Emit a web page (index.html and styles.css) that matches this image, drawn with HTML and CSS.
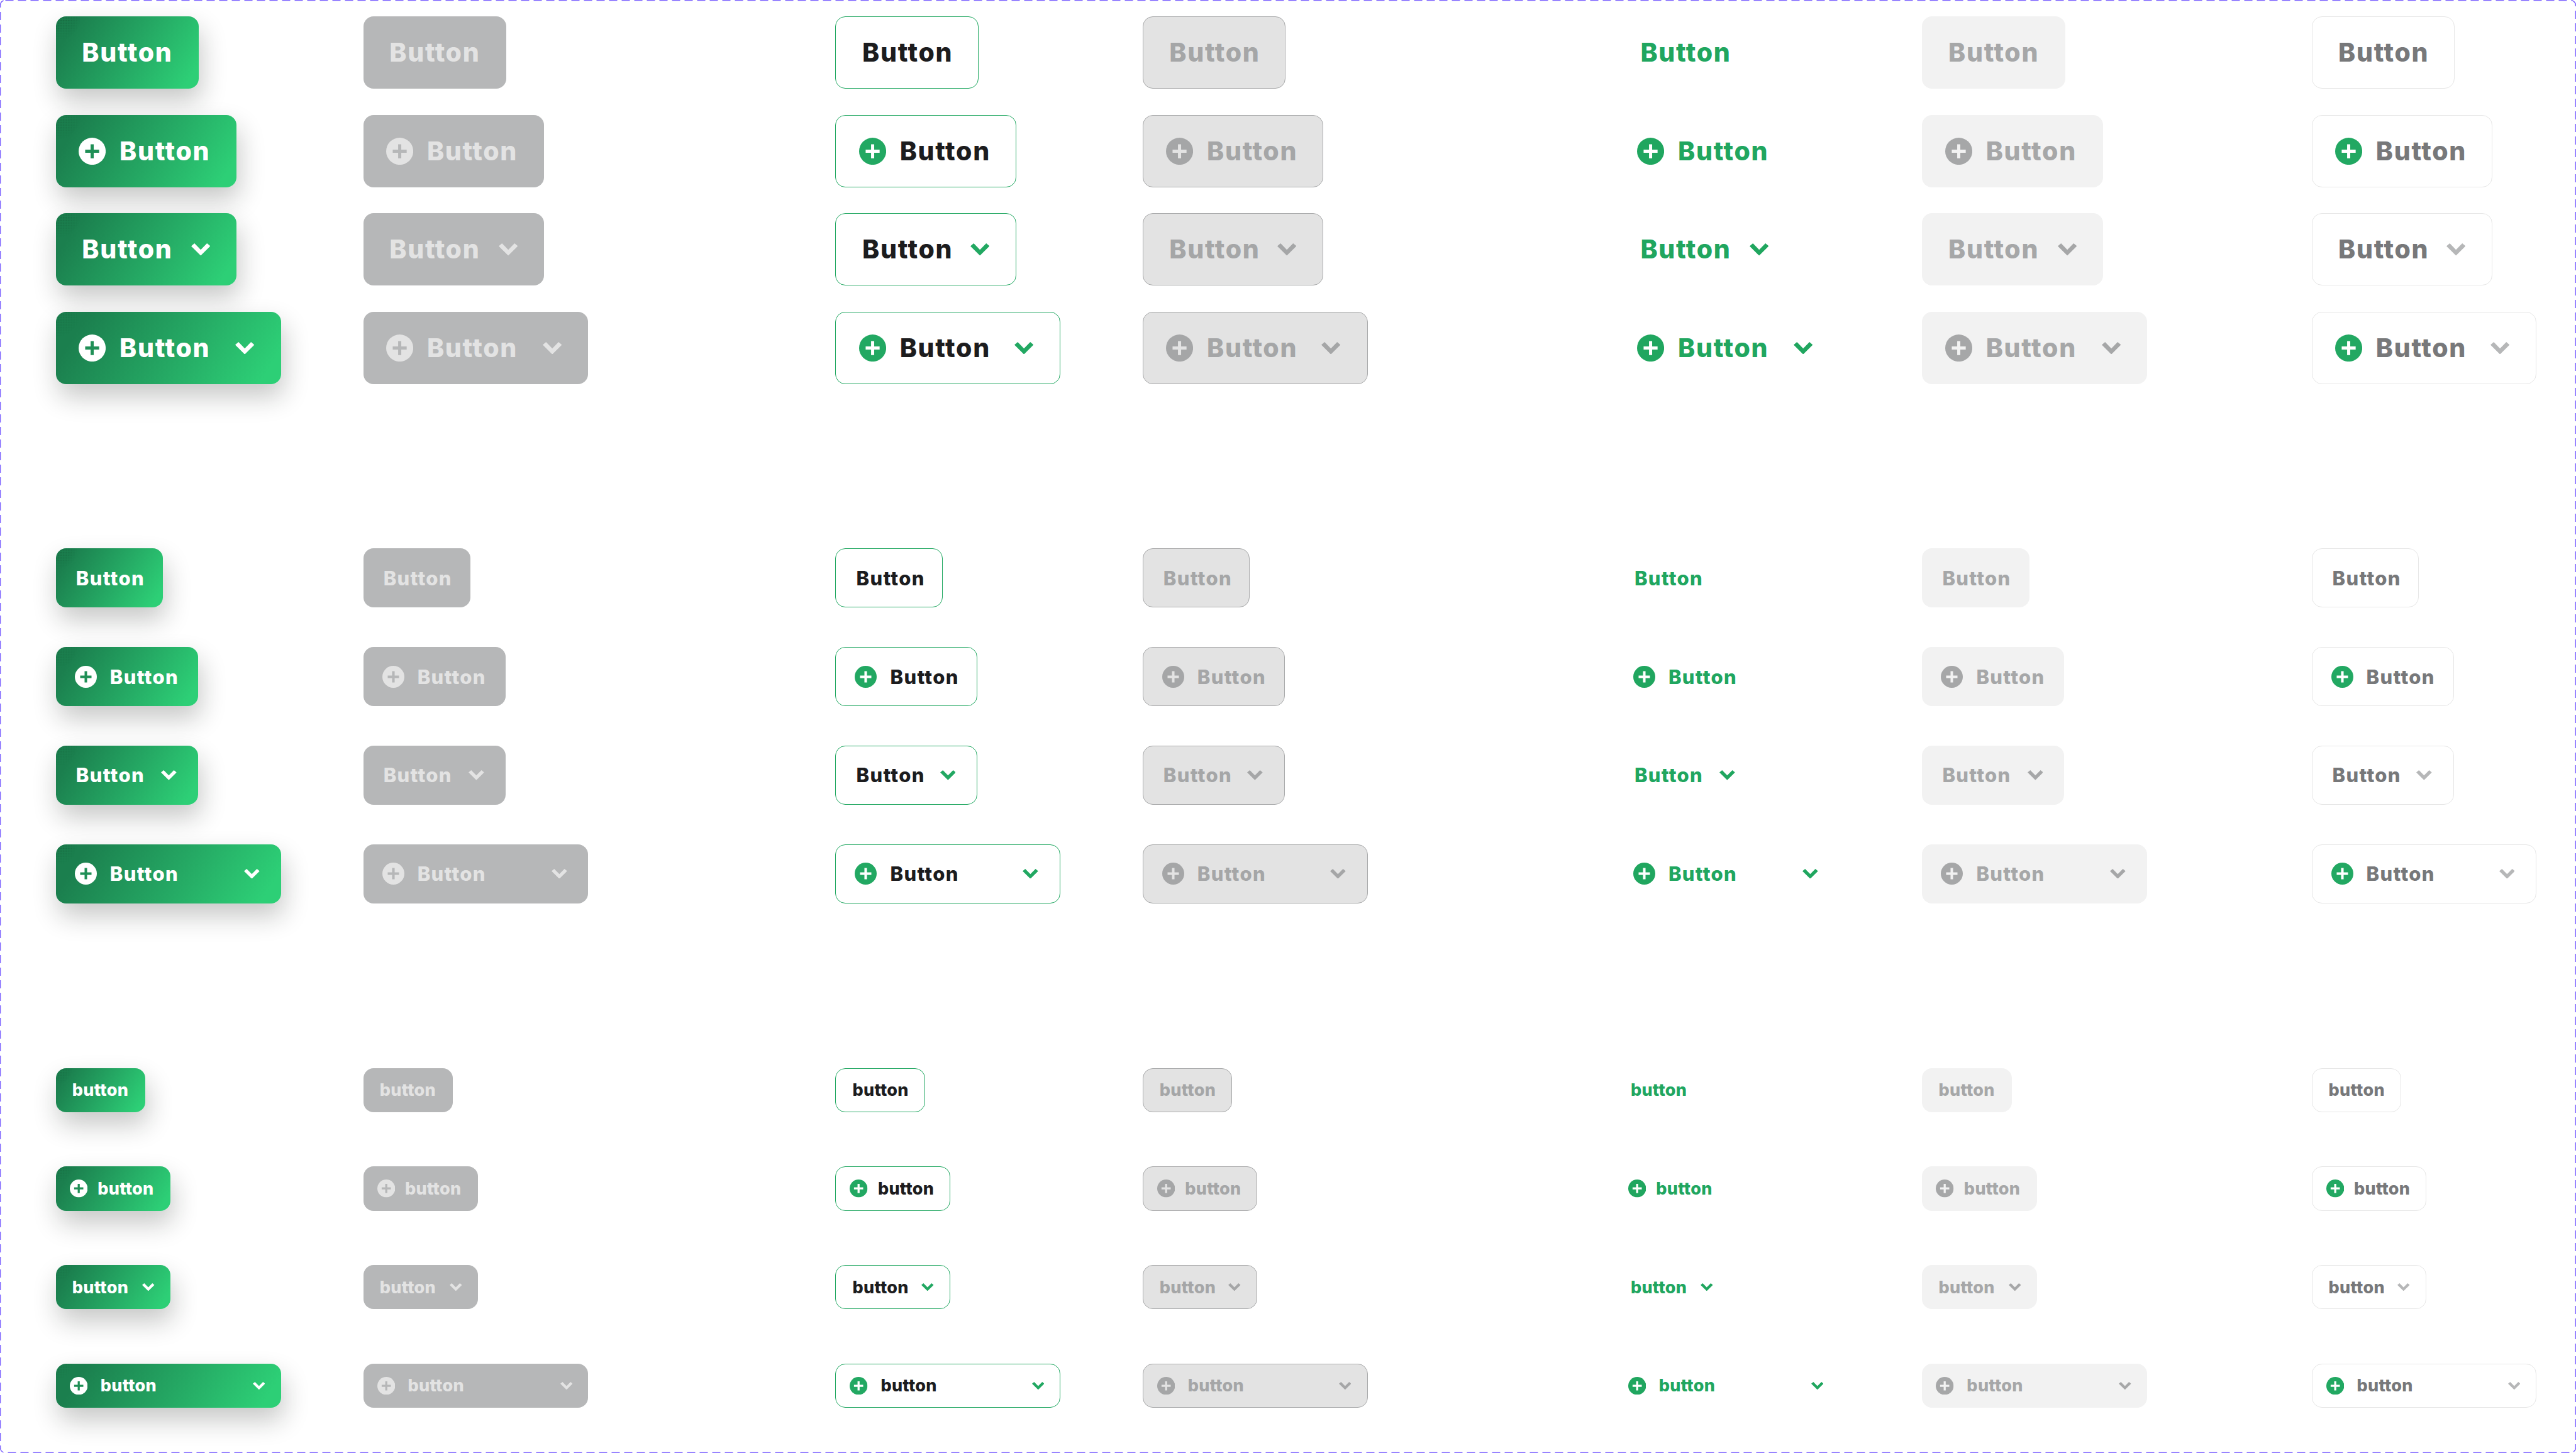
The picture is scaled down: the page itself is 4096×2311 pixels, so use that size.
FILE: index.html
```html
<!DOCTYPE html>
<html lang="en">
<head>
<meta charset="utf-8">
<title>Buttons</title>
<link rel="stylesheet" href="styles.css">
</head>
<body>
<svg class="defs" width="0" height="0" aria-hidden="true">
  <symbol id="plus" viewBox="0 0 66 66"><circle cx="33" cy="33" r="33" fill="currentColor"/><path class="plus-mark" d="M29.2 16h7.6v13.2H50v7.6H36.800V50h-7.6V36.800H16v-7.600h13.200z"/></symbol>
  <symbol id="chev" viewBox="0 0 46.500 30" preserveAspectRatio="none"><path fill="currentColor" d="M0 6.700 8 0l15.200 15.700L38.500 0l8 6.700L23.200 30z"/></symbol>
</svg>
<main class="board">
  <section class="group lg">
    <button class="btn primary plain"><span class="lbl">Button</span></button>
    <button class="btn primary-off plain"><span class="lbl">Button</span></button>
    <button class="btn outline plain"><span class="lbl">Button</span></button>
    <button class="btn outline-off plain"><span class="lbl">Button</span></button>
    <button class="btn ghost plain"><span class="lbl">Button</span></button>
    <button class="btn ghost-off plain"><span class="lbl">Button</span></button>
    <button class="btn line plain"><span class="lbl">Button</span></button>

    <button class="btn primary lead"><svg class="ico"><use href="#plus"/></svg><span class="lbl">Button</span></button>
    <button class="btn primary-off lead"><svg class="ico"><use href="#plus"/></svg><span class="lbl">Button</span></button>
    <button class="btn outline lead"><svg class="ico"><use href="#plus"/></svg><span class="lbl">Button</span></button>
    <button class="btn outline-off lead"><svg class="ico"><use href="#plus"/></svg><span class="lbl">Button</span></button>
    <button class="btn ghost lead"><svg class="ico"><use href="#plus"/></svg><span class="lbl">Button</span></button>
    <button class="btn ghost-off lead"><svg class="ico"><use href="#plus"/></svg><span class="lbl">Button</span></button>
    <button class="btn line lead"><svg class="ico"><use href="#plus"/></svg><span class="lbl">Button</span></button>

    <button class="btn primary trail"><span class="lbl">Button</span><svg class="car"><use href="#chev"/></svg></button>
    <button class="btn primary-off trail"><span class="lbl">Button</span><svg class="car"><use href="#chev"/></svg></button>
    <button class="btn outline trail"><span class="lbl">Button</span><svg class="car"><use href="#chev"/></svg></button>
    <button class="btn outline-off trail"><span class="lbl">Button</span><svg class="car"><use href="#chev"/></svg></button>
    <button class="btn ghost trail"><span class="lbl">Button</span><svg class="car"><use href="#chev"/></svg></button>
    <button class="btn ghost-off trail"><span class="lbl">Button</span><svg class="car"><use href="#chev"/></svg></button>
    <button class="btn line trail"><span class="lbl">Button</span><svg class="car"><use href="#chev"/></svg></button>

    <button class="btn primary both"><svg class="ico"><use href="#plus"/></svg><span class="lbl">Button</span><svg class="car"><use href="#chev"/></svg></button>
    <button class="btn primary-off both"><svg class="ico"><use href="#plus"/></svg><span class="lbl">Button</span><svg class="car"><use href="#chev"/></svg></button>
    <button class="btn outline both"><svg class="ico"><use href="#plus"/></svg><span class="lbl">Button</span><svg class="car"><use href="#chev"/></svg></button>
    <button class="btn outline-off both"><svg class="ico"><use href="#plus"/></svg><span class="lbl">Button</span><svg class="car"><use href="#chev"/></svg></button>
    <button class="btn ghost both"><svg class="ico"><use href="#plus"/></svg><span class="lbl">Button</span><svg class="car"><use href="#chev"/></svg></button>
    <button class="btn ghost-off both"><svg class="ico"><use href="#plus"/></svg><span class="lbl">Button</span><svg class="car"><use href="#chev"/></svg></button>
    <button class="btn line both"><svg class="ico"><use href="#plus"/></svg><span class="lbl">Button</span><svg class="car"><use href="#chev"/></svg></button>
  </section>

  <section class="group md">
    <button class="btn primary plain"><span class="lbl">Button</span></button>
    <button class="btn primary-off plain"><span class="lbl">Button</span></button>
    <button class="btn outline plain"><span class="lbl">Button</span></button>
    <button class="btn outline-off plain"><span class="lbl">Button</span></button>
    <button class="btn ghost plain"><span class="lbl">Button</span></button>
    <button class="btn ghost-off plain"><span class="lbl">Button</span></button>
    <button class="btn line plain"><span class="lbl">Button</span></button>

    <button class="btn primary lead"><svg class="ico"><use href="#plus"/></svg><span class="lbl">Button</span></button>
    <button class="btn primary-off lead"><svg class="ico"><use href="#plus"/></svg><span class="lbl">Button</span></button>
    <button class="btn outline lead"><svg class="ico"><use href="#plus"/></svg><span class="lbl">Button</span></button>
    <button class="btn outline-off lead"><svg class="ico"><use href="#plus"/></svg><span class="lbl">Button</span></button>
    <button class="btn ghost lead"><svg class="ico"><use href="#plus"/></svg><span class="lbl">Button</span></button>
    <button class="btn ghost-off lead"><svg class="ico"><use href="#plus"/></svg><span class="lbl">Button</span></button>
    <button class="btn line lead"><svg class="ico"><use href="#plus"/></svg><span class="lbl">Button</span></button>

    <button class="btn primary trail"><span class="lbl">Button</span><svg class="car"><use href="#chev"/></svg></button>
    <button class="btn primary-off trail"><span class="lbl">Button</span><svg class="car"><use href="#chev"/></svg></button>
    <button class="btn outline trail"><span class="lbl">Button</span><svg class="car"><use href="#chev"/></svg></button>
    <button class="btn outline-off trail"><span class="lbl">Button</span><svg class="car"><use href="#chev"/></svg></button>
    <button class="btn ghost trail"><span class="lbl">Button</span><svg class="car"><use href="#chev"/></svg></button>
    <button class="btn ghost-off trail"><span class="lbl">Button</span><svg class="car"><use href="#chev"/></svg></button>
    <button class="btn line trail"><span class="lbl">Button</span><svg class="car"><use href="#chev"/></svg></button>

    <button class="btn primary both"><svg class="ico"><use href="#plus"/></svg><span class="lbl">Button</span><svg class="car"><use href="#chev"/></svg></button>
    <button class="btn primary-off both"><svg class="ico"><use href="#plus"/></svg><span class="lbl">Button</span><svg class="car"><use href="#chev"/></svg></button>
    <button class="btn outline both"><svg class="ico"><use href="#plus"/></svg><span class="lbl">Button</span><svg class="car"><use href="#chev"/></svg></button>
    <button class="btn outline-off both"><svg class="ico"><use href="#plus"/></svg><span class="lbl">Button</span><svg class="car"><use href="#chev"/></svg></button>
    <button class="btn ghost both"><svg class="ico"><use href="#plus"/></svg><span class="lbl">Button</span><svg class="car"><use href="#chev"/></svg></button>
    <button class="btn ghost-off both"><svg class="ico"><use href="#plus"/></svg><span class="lbl">Button</span><svg class="car"><use href="#chev"/></svg></button>
    <button class="btn line both"><svg class="ico"><use href="#plus"/></svg><span class="lbl">Button</span><svg class="car"><use href="#chev"/></svg></button>
  </section>

  <section class="group sm">
    <button class="btn primary plain"><span class="lbl">button</span></button>
    <button class="btn primary-off plain"><span class="lbl">button</span></button>
    <button class="btn outline plain"><span class="lbl">button</span></button>
    <button class="btn outline-off plain"><span class="lbl">button</span></button>
    <button class="btn ghost plain"><span class="lbl">button</span></button>
    <button class="btn ghost-off plain"><span class="lbl">button</span></button>
    <button class="btn line plain"><span class="lbl">button</span></button>

    <button class="btn primary lead"><svg class="ico"><use href="#plus"/></svg><span class="lbl">button</span></button>
    <button class="btn primary-off lead"><svg class="ico"><use href="#plus"/></svg><span class="lbl">button</span></button>
    <button class="btn outline lead"><svg class="ico"><use href="#plus"/></svg><span class="lbl">button</span></button>
    <button class="btn outline-off lead"><svg class="ico"><use href="#plus"/></svg><span class="lbl">button</span></button>
    <button class="btn ghost lead"><svg class="ico"><use href="#plus"/></svg><span class="lbl">button</span></button>
    <button class="btn ghost-off lead"><svg class="ico"><use href="#plus"/></svg><span class="lbl">button</span></button>
    <button class="btn line lead"><svg class="ico"><use href="#plus"/></svg><span class="lbl">button</span></button>

    <button class="btn primary trail"><span class="lbl">button</span><svg class="car"><use href="#chev"/></svg></button>
    <button class="btn primary-off trail"><span class="lbl">button</span><svg class="car"><use href="#chev"/></svg></button>
    <button class="btn outline trail"><span class="lbl">button</span><svg class="car"><use href="#chev"/></svg></button>
    <button class="btn outline-off trail"><span class="lbl">button</span><svg class="car"><use href="#chev"/></svg></button>
    <button class="btn ghost trail"><span class="lbl">button</span><svg class="car"><use href="#chev"/></svg></button>
    <button class="btn ghost-off trail"><span class="lbl">button</span><svg class="car"><use href="#chev"/></svg></button>
    <button class="btn line trail"><span class="lbl">button</span><svg class="car"><use href="#chev"/></svg></button>

    <button class="btn primary both"><svg class="ico"><use href="#plus"/></svg><span class="lbl">button</span><svg class="car"><use href="#chev"/></svg></button>
    <button class="btn primary-off both"><svg class="ico"><use href="#plus"/></svg><span class="lbl">button</span><svg class="car"><use href="#chev"/></svg></button>
    <button class="btn outline both"><svg class="ico"><use href="#plus"/></svg><span class="lbl">button</span><svg class="car"><use href="#chev"/></svg></button>
    <button class="btn outline-off both"><svg class="ico"><use href="#plus"/></svg><span class="lbl">button</span><svg class="car"><use href="#chev"/></svg></button>
    <button class="btn ghost both"><svg class="ico"><use href="#plus"/></svg><span class="lbl">button</span><svg class="car"><use href="#chev"/></svg></button>
    <button class="btn ghost-off both"><svg class="ico"><use href="#plus"/></svg><span class="lbl">button</span><svg class="car"><use href="#chev"/></svg></button>
    <button class="btn line both"><svg class="ico"><use href="#plus"/></svg><span class="lbl">button</span><svg class="car"><use href="#chev"/></svg></button>
  </section>

  <svg class="frame" width="4096" height="2311" aria-hidden="true"><rect x="0.5" y="0.5" width="4095" height="2310" rx="8" fill="none" stroke="#7b61ff" stroke-width="1.500" stroke-dasharray="13 7"/></svg>
</main>
</body>
</html>
```
FILE: styles.css
```css
html, body { margin: 0; padding: 0; background: #fff; }
.defs { position: absolute; }

.board {
  position: relative;
  width: 4096px;
  height: 2311px;
  box-sizing: border-box;
  padding: 26.100px 0 0 88.800px;
  overflow: hidden;
  background: #fff;
  font-family: Inter, "Liberation Sans", sans-serif;
  font-weight: 800;
}
.frame { position: absolute; left: 0; top: 0; pointer-events: none; }

.group {
  display: grid;
  grid-template-columns: 488.900px 750.800px 488.300px 750.100px 489.600px 619.100px 1fr;
  justify-items: start;
  align-items: start;
}
.group + .group { margin-top: 261.300px; }
.group + .group.sm { margin-top: 262.100px; }

.group.lg {
  row-gap: 41.700px;
  --h: 115px; --fs: 41px; --ls: 1.700px;
  --pt: 41.500px; --pi: 36.600px; --gi: 21.500px; --gb: 21.500px; --pr: 41.800px;
  --iw: 43.100px; --cw: 30.400px; --ch: 19.600px;
  --w-plain: 227.300px; --w-one: 287.300px; --dot: 40px;
}
.group.md {
  row-gap: 62.700px;
  --h: 94px; --fs: 31px; --ls: 1.300px;
  --pt: 32px; --pi: 30px; --gi: 21px; --gb: 21px; --pr: 34px;
  --iw: 35px; --cw: 24.800px; --ch: 15.700px;
  --w-plain: 170.500px; --w-one: 226px; --dot: 34px;
}
.group.sm {
  row-gap: 86.200px;
  --h: 70.500px; --fs: 27px; --ls: .3px;
  --pt: 26px; --pi: 22px; --gi: 16px; --gb: 20.500px; --pr: 25.200px;
  --iw: 28.400px; --cw: 19.600px; --ch: 12.400px;
  --w-plain: 142.500px; --w-one: 182.300px; --dot: 26px;
}

.btn {
  display: flex;
  align-items: center;
  box-sizing: border-box;
  height: var(--h);
  margin: 0;
  padding: 0 var(--pr) 0 var(--pt);
  border: 0 solid transparent;
  border-radius: 16px;
  background: transparent;
  color: inherit;
  font: inherit;
  font-size: var(--fs);
  letter-spacing: var(--ls);
  line-height: 1;
}
.plain { width: var(--w-plain); }
.lead { width: var(--w-one); padding-left: var(--pi); }
.trail { width: var(--w-one); }
.both { width: 357.800px; padding-left: var(--pi); }

.ico { flex: none; width: var(--iw); height: var(--iw); margin-right: var(--gi); color: var(--ic); }
.both .ico { margin-right: var(--gb); }
.car { flex: none; width: var(--cw); height: var(--ch); margin-left: auto; color: var(--cc); }
.plus-mark { fill: var(--pm); }

.primary {
  position: relative;
  color: #fff;
  --ic: #fff; --pm: #1f8f56; --cc: #fff;
  background: linear-gradient(122deg, #1b7f4e 12%, #25a964 55%, #2dcf76 92%);
  box-shadow: 4px 20px 40px rgba(20, 24, 22, .24);
}
.primary::before {
  content: "";
  position: absolute;
  inset: 0;
  border-radius: inherit;
  background: radial-gradient(circle, rgba(8, 40, 24, .6) .6px, transparent .9px) 0 0 / 2.600px 2.600px;
  -webkit-mask-image: radial-gradient(circle at 0 0, #000, transparent var(--dot));
  mask-image: radial-gradient(circle at 0 0, #000, transparent var(--dot));
  pointer-events: none;
}
.primary-off { background: #b6b7b8; color: #e3e3e3; --ic: #e3e3e3; --pm: #b6b7b8; --cc: #e3e3e3; }
.outline { background: #fff; border: 1.500px solid #22a862; color: #1c1c1e; --ic: #22a862; --pm: #fff; --cc: #22a862; }
.outline-off { background: #e3e3e3; border: 1.500px solid #a8a9aa; color: #a5a6a7; --ic: #a5a6a7; --pm: #e3e3e3; --cc: #a5a6a7; }
.ghost { color: #20a65f; --ic: #20a65f; --pm: #fff; --cc: #20a65f; }
.ghost-off { background: #f2f2f2; color: #a6a7a8; --ic: #a6a7a8; --pm: #f2f2f2; --cc: #a6a7a8; }
.line { background: #fff; border: 1.500px solid #e6e6e6; color: #77787a; --ic: #22a862; --pm: #fff; --cc: #b6b7b8; }
```
